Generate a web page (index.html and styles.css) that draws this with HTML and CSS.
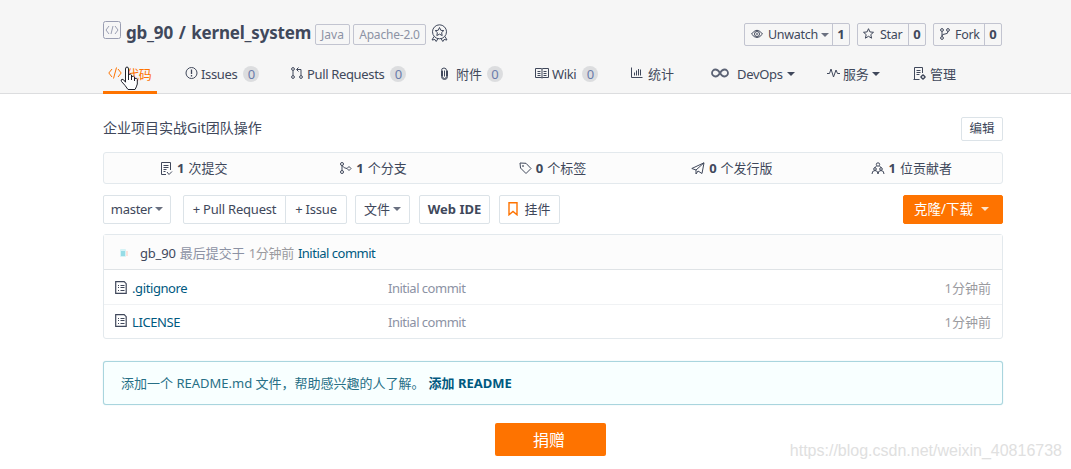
FILE: index.html
```html
<!DOCTYPE html>
<html lang="zh-CN">
<head>
    <meta charset="UTF-8">
    <meta name="viewport" content="width=device-width, initial-scale=1.0">
    <title>gb_90/kernel_system</title>
    <link rel="stylesheet" href="styles.css">
</head>
<body>
    <header class="header">
        <div class="container">
            <div class="title-row">
                <svg class="project-icon" width="18" height="18" viewBox="0 0 18 18"><rect x=".5" y=".5" width="17" height="17" rx="2"/><path d="M6 5L3 9l3 4M12 5l3 4-3 4M10 5l-2 8"/></svg>
                <h1>gb_90 / kernel_system</h1>
                <span class="tag tag-java">Java</span>
                <span class="tag tag-license">Apache-2.0</span>
                <svg class="medal" width="17" height="18" viewBox="0 0 17 18"><circle cx="8.5" cy="7.8" r="7"/><path d="M8.5 3.5l1.3 2.8 3 .3-2.2 2 .6 3-2.7-1.5-2.7 1.5.6-3-2.2-2 3-.3zM3 12.5l-2 3.5 3-.5 1.2 2 1.8-3M14 12.5l2 3.5-3-.5-1.2 2-1.8-3"/></svg>
                <div class="actions">
                    <div class="action watch"><span class="action-name"><svg width="12" height="10" viewBox="0 0 12 10"><path d="M.5 5Q6-2.5 11.5 5 6 12 .5 5z"/><circle cx="6" cy="5" r="2.5"/><circle cx="6" cy="5" r=".5"/></svg><span>Unwatch</span><i class="caret"></i></span><b>1</b></div>
                    <div class="action star"><span class="action-name"><svg width="11" height="11" viewBox="0 0 11 11"><path d="M5.5.7l1.4 3.2 3.6.4-2.7 2.3.8 3.6-3.1-1.9-3.1 1.9.8-3.6L.5 4.3l3.6-.4z"/></svg><span>Star</span></span><b>0</b></div>
                    <div class="action fork"><span class="action-name"><svg width="10" height="12" viewBox="0 0 10 12"><circle cx="2" cy="2" r="1.4"/><circle cx="8" cy="2" r="1.4"/><circle cx="2" cy="10" r="1.4"/><path d="M2 3.5v5M8 3.5Q8 6 5 6T2 8"/></svg><span>Fork</span></span><b>0</b></div>
                </div>
            </div>
            <nav class="tabs">
                <a class="tab active"><svg width="14" height="12" viewBox="0 0 14 12"><path d="M4 2L.8 6 4 10M10 2l3.2 4L10 10M8.5.5l-3 11"/></svg><span>代码</span></a>
                <a class="tab"><svg width="13" height="12" viewBox="0 0 13 12"><circle cx="6.5" cy="6" r="5.5"/><path d="M6.5 2.5V7M6.5 8v1.5" stroke-width="1.3"/></svg><span>Issues</span><em>0</em></a>
                <a class="tab tab-pull"><svg width="12" height="12" viewBox="0 0 12 12"><circle cx="2" cy="2" r="1.4"/><circle cx="2" cy="10" r="1.4"/><circle cx="10" cy="10" r="1.4"/><path d="M2 3.5v5M10 8.5v-6H6M7.5.5l-2 2 2 2"/></svg><span>Pull Requests</span><em>0</em></a>
                <a class="tab tab-attach"><svg width="9" height="13" viewBox="0 0 9 13"><path d="M2.5 3.5v6a2 2 0 0 0 4 0v-6a2.5 2.5 0 0 0-5 0v6a3 3 0 0 0 6 0v-6M4.500 3.5v6"/></svg><span>附件</span><em>0</em></a>
                <a class="tab"><svg width="14" height="12" viewBox="0 0 14 12"><path d="M.5 1.5H6l1 .5 1-.5h5.500v9H8l-1 .5-1-.5H.5zM7 2v9M2.500 4.500h3M2.500 6.500h3M2.500 8.500h3M8.500 4.500h3M8.500 6.500h3M8.500 8.500h3"/></svg><span>Wiki</span><em>0</em></a>
                <a class="tab tab-stat"><svg width="12" height="12" viewBox="0 0 12 12"><path d="M.5.5v10h11M3.500 8.500v-3M5.500 8.500v-5M7.500 8.500V2M9.500 8.500v-6"/></svg><span>统计</span></a>
                <a class="tab tab-devops"><svg width="18" height="10" viewBox="0 0 18 10"><path stroke-width="1.800" stroke="#5c6375" d="M9 5C7.500 2.500 6.500 1.500 4.500 1.500a3.500 3.500 0 0 0 0 7C6.500 8.500 7.500 7.500 9 5s2.500-3.500 4.500-3.500a3.500 3.500 0 0 1 0 7C11.500 8.500 10.500 7.500 9 5z"/></svg><span>DevOps</span><i class="caret"></i></a>
                <a class="tab"><svg width="13" height="12" viewBox="0 0 13 12"><path d="M0 6.500h2.500L4 2l2.500 8L9 3l1.500 3.500H13"/></svg><span>服务</span><i class="caret"></i></a>
                <a class="tab tab-manage"><svg width="13" height="13" viewBox="0 0 13 13"><path d="M6 12.500H1.500V.5h8V6M3.500 3.500h4M3.500 5.500h4M3.500 7.500h3M.5 12.500h6"/><circle cx="10" cy="10" r="1.600" stroke-width="1.300"/><path d="M10 7v1M10 12v1M7 10h1M12 10h1"/></svg><span>管理</span></a>
            </nav>
        </div>
        <svg class="pointer" width="19" height="25" viewBox="0 0 19 25"><path d="M5.500 14V3q0-2 1.500-2t1.500 2v7V8.500q2.500-1 3 .5v1.500q2.500-.8 3 .5v1.500q2.500-.8 2.800.9V18q-.8 3-2.300 5.500H8Q5 19 1.500 15.500q-1-1.800.5-2.300 1.800 0 3.500 3zM8.500 9v5M11.500 10v4M14.500 12v3"/></svg>
    </header>

    <main class="container">
        <div class="description">
            <p>企业项目实战Git团队操作</p>
            <button class="btn edit">编辑</button>
        </div>

        <div class="stats">
            <div class="stat"><svg width="13" height="13" viewBox="0 0 13 13"><path d="M6 12.500H1.500V.5h9V8M3.500 3.500h5M3.500 5.500h5M3.500 7.500h3M3.500 9.500h2M7 10l2 2.500 3-3"/></svg><b>1</b>次提交</div>
            <div class="stat"><svg width="13" height="12" viewBox="0 0 13 12"><circle cx="3" cy="2" r="1.500"/><circle cx="3" cy="10" r="1.500"/><path d="M10 4.500l2 2-2 2-2-2zM3 3.500v5M3 3.500Q5 6.500 8 6.500"/></svg><b>1</b>个分支</div>
            <div class="stat"><svg width="13" height="12" viewBox="0 0 13 12"><path d="M1 1l6 .3L12 6.500 7 11.500 1.500 6z"/><circle cx="4" cy="4" r=".5"/></svg><b>0</b>个标签</div>
            <div class="stat"><svg width="14" height="13" viewBox="0 0 14 13"><path d="M.8 6.500L13 .8 11 11.500 7 9 5 12V8zM13 .8L5 8"/></svg><b>0</b>个发行版</div>
            <div class="stat"><svg width="14" height="12" viewBox="0 0 14 12"><circle cx="7" cy="2.500" r="1.700"/><circle cx="4" cy="7" r="1.300"/><circle cx="10" cy="7" r="1.300"/><path d="M1 12q0-3.500 3-3.500T7 12q0-3.500 3-3.500t3 3.500M5.500 4L3.500 6M8.500 4l2 2"/></svg><b>1</b>位贡献者</div>
        </div>

        <div class="toolbar">
            <button class="btn branch"><span>master</span><i class="caret"></i></button>
            <div class="btn-group">
                <button class="btn pull">+ Pull Request</button>
                <button class="btn issue">+ Issue</button>
            </div>
            <button class="btn files-menu"><span>文件</span><i class="caret"></i></button>
            <button class="btn ide">Web IDE</button>
            <button class="btn widget"><svg width="10" height="14" viewBox="0 0 10 14"><path d="M1 .8h8v12L5 9.500l-4 3.300z"/></svg><span>挂件</span></button>
            <button class="btn clone"><span>克隆/下载</span><i class="caret"></i></button>
        </div>

        <div class="files">
            <div class="commit">
                <svg class="avatar" width="10" height="8" viewBox="0 0 10 8"><rect width="6" height="8" rx="1" fill="#d6f3f6"/><rect x="1" y="2" width="4" height="5" fill="#96dce6"/><rect x="6" y="2" width="2" height="5" fill="#fbe2dc"/></svg>
                <span class="author">gb_90</span>
                <span class="when">最后提交于</span>
                <span class="ago">1分钟前</span>
                <a class="message-link">Initial commit</a>
            </div>
            <div class="file">
                <svg width="12" height="13" viewBox="0 0 12 13"><path d="M.7.7h8.500l2 2v9.600H.7zM3 4.500h1M3 6.500h1M3 9.500h1M5.500 4.500h4M5.500 6.500h4M5.500 9.500h4"/></svg>
                <a class="file-name">.gitignore</a>
                <span class="message">Initial commit</span>
                <span class="ago">1分钟前</span>
            </div>
            <div class="file">
                <svg width="12" height="13" viewBox="0 0 12 13"><path d="M.7.7h8.500l2 2v9.600H.7zM3 4.500h1M3 6.500h1M3 9.500h1M5.500 4.500h4M5.500 6.500h4M5.500 9.500h4"/></svg>
                <a class="file-name">LICENSE</a>
                <span class="message">Initial commit</span>
                <span class="ago">1分钟前</span>
            </div>
        </div>

        <div class="readme-tip"><span>添加一个 README.md 文件，帮助感兴趣的人了解。</span><a>添加 README</a></div>
        <button class="donate">捐赠</button>
    </main>
    <div class="watermark">https://blog.csdn.net/weixin_40816738</div>
</body>
</html>
```
FILE: styles.css
```css
* {
    box-sizing: border-box;
}

body {
    margin: 0;
    height: 469px;
    overflow: hidden;
    background: #fff;
    color: #40485b;
    font-family: "Noto Sans", "Noto Sans CJK SC", sans-serif;
    font-size: 13px;
    line-height: 18px;
}

h1, p {
    margin: 0;
}

i, em {
    font-style: normal;
}

a {
    color: #005980;
}

svg {
    fill: none;
    stroke: #40485b;
    stroke-width: 1;
    flex: none;
}

button {
    font: inherit;
    color: inherit;
    white-space: nowrap;
}

.container {
    width: 900px;
    margin-left: 103px;
}

.caret {
    width: 0;
    height: 0;
    border: 4px solid transparent;
    border-top-color: currentColor;
    border-bottom: 0;
}

.header {
    height: 94px;
    background: #f6f6f6;
    border-bottom: 1px solid #dcdddf;
}

.title-row {
    display: flex;
    height: 57px;
    padding-top: 21px;
}

.project-icon {
    stroke: #9a9eb2;
}

h1 {
    width: 189px;
    margin-left: 5px;
    font-size: 17px;
    line-height: 24px;
    letter-spacing: -0.2px;
    word-spacing: 1.5px;
    white-space: nowrap;
}

.tag {
    height: 21px;
    margin-top: 3px;
    border: 1px solid #c2c4d0;
    border-radius: 2px;
    color: #8c92a4;
    font-size: 12px;
    line-height: 20px;
    text-align: center;
}

.tag-java {
    width: 35px;
}

.tag-license {
    width: 73px;
    margin-left: 3px;
    letter-spacing: -0.2px;
}

.medal {
    margin: 3px 0 0 5px;
}

.actions {
    display: flex;
    gap: 7px;
    margin: 2px 1px 0 auto;
}

.action {
    display: flex;
    height: 23px;
    border: 1px solid #c2c4d0;
    border-radius: 2px;
    line-height: 21px;
}

.watch {
    width: 106px;
}

.star, .fork {
    width: 69px;
}

.action-name {
    display: flex;
    flex: 1;
    align-items: center;
    padding-left: 6px;
    font-size: 12.5px;
    letter-spacing: -0.3px;
}

.star .action-name {
    padding-left: 5px;
}

.star .action-name span {
    margin-left: 6px;
}

.action-name svg {
    margin-bottom: 2px;
}

.action-name span {
    margin-left: 5px;
}

.action-name .caret {
    margin-left: 3px;
    border-top-color: #6a7080;
}

.action b {
    width: 17px;
    border-left: 1px solid #c2c4d0;
    text-align: center;
}

.tabs {
    display: grid;
    grid-template-columns: 82px 106px 149px 95px 96px 80px 116px 86px 90px;
    height: 37px;
}

.tab {
    display: flex;
    height: 34px;
    align-items: center;
    white-space: nowrap;
    color: #40485b;
}

.tab svg {
    margin-bottom: 2px;
}

.tab span {
    margin-left: 3px;
    letter-spacing: -0.35px;
}

.tab em {
    width: 16px;
    height: 16px;
    margin-left: 6px;
    border-radius: 8px;
    background: #dcdddf;
    color: #6b7cab;
    line-height: 16px;
    text-align: center;
}

.tab .caret {
    margin-left: 4px;
}

.tab.active {
    width: 54px;
    height: 37px;
    padding-left: 5px;
    border-bottom: 3px solid #fe7300;
    color: #fe7300;
}

.active svg {
    stroke: #fe7300;
}

.tab.active span {
    margin-left: 4px;
}

.tab-pull span {
    margin-left: 4px;
}

.tab-attach span, .tab-stat span, .tab-manage span {
    margin-left: 4px;
    letter-spacing: 0;
}

.tab-attach span {
    margin-left: 7px;
}

.tab-attach em {
    margin-left: 5px;
}

.tab-stat span {
    margin-left: 5px;
}

.tab-devops span {
    margin-left: 8px;
    letter-spacing: -0.3px;
}

.pointer {
    position: absolute;
    left: 120px;
    top: 66px;
    fill: #fff;
    stroke: #20212a;
}

.description {
    display: flex;
    align-items: center;
    justify-content: space-between;
    height: 24px;
    margin-top: 23px;
}

.description p {
    margin-bottom: 2px;
    font-size: 14px;
}

.btn {
    display: flex;
    height: 29px;
    padding: 0 0 1px;
    align-items: center;
    justify-content: center;
    border: 1px solid #dce3e8;
    border-radius: 2px;
    background: #fff;
}

.edit {
    width: 42px;
    height: 24px;
    padding: 0;
    font-size: 12.5px;
}

.stats {
    display: grid;
    grid-template-columns: repeat(5, 1fr);
    height: 32px;
    margin-top: 11px;
    padding-right: 1px;
    border: 1px solid #e3e9ed;
    border-radius: 3px;
    background: #fcfcfc;
}

.stat {
    display: flex;
    align-items: center;
    justify-content: center;
    gap: 4px;
}

.toolbar {
    display: flex;
    margin-top: 11px;
}

.branch {
    width: 68px;
    letter-spacing: -0.3px;
}

.branch .caret, .files-menu .caret {
    margin-left: 3px;
    border-top-color: #6a7080;
}

.btn-group {
    display: flex;
    margin: 0 8px 0 12px;
}

.btn-group .btn {
    letter-spacing: -0.2px;
}

.pull {
    width: 103px;
    border-radius: 2px 0 0 2px;
}

.issue {
    width: 62px;
    margin-left: -1px;
    border-radius: 0 2px 2px 0;
}

.files-menu {
    width: 55px;
}

.ide {
    width: 71px;
    margin-left: 9px;
    font-weight: bold;
}

.widget {
    width: 61px;
    margin-left: 9px;
    gap: 6px;
}

.widget svg {
    stroke: #fe7300;
    stroke-width: 1.4;
}

.clone {
    width: 100px;
    margin-left: auto;
    padding-right: 3px;
    border-color: #fe7300;
    background: #fe7300;
    color: #fff;
    font-size: 13.5px;
}

.clone .caret {
    margin-left: 8px;
    border-top-color: #ffe3cc;
}

.files {
    height: 105px;
    margin-top: 10px;
    border: 1px solid #e3e9ed;
    border-radius: 3px;
}

.commit {
    display: flex;
    align-items: center;
    height: 35px;
    padding: 2px 0 0 16px;
    border-bottom: 1px solid #dfe3e6;
    background: #fcfcfc;
}

.avatar {
    stroke: none;
}

.author {
    margin-left: 10px;
    letter-spacing: -0.2px;
}

.when {
    margin-left: 4px;
    color: #8c92a4;
}

.ago {
    color: #9b9b9f;
}

.commit .ago {
    margin: 0 4px;
    letter-spacing: -0.3px;
}

.message-link, .message {
    letter-spacing: -0.5px;
}

.file {
    display: flex;
    align-items: center;
    height: 34px;
    padding: 2px 11px 0 11px;
}

.file + .file {
    padding-top: 0;
    border-top: 1px solid #f0f2f4;
}

.file svg {
    margin-bottom: 2px;
    stroke-width: 1.2;
}

.file-name {
    width: 256px;
    margin-left: 5px;
    letter-spacing: -0.4px;
}

.message {
    flex: 1;
    color: #8c92a4;
}

.readme-tip {
    display: flex;
    align-items: center;
    height: 44px;
    margin-top: 22px;
    padding-left: 17px;
    border: 1px solid #a9d5de;
    border-radius: 3px;
    background: #f8ffff;
    box-shadow: 0 0 1px #a9d5de;
    color: #276f86;
}

.readme-tip a {
    margin-left: 4px;
    font-weight: bold;
}

.donate {
    display: block;
    width: 111px;
    height: 33px;
    margin: 18px 0 0 392px;
    padding: 0 3px 0 0;
    border: 0;
    border-radius: 2px;
    background: #fe7300;
    color: #fff;
    font-size: 16px;
}

.watermark {
    position: absolute;
    right: 9px;
    bottom: 9px;
    color: #e0e0e0;
    font-family: "Liberation Sans", sans-serif;
    font-size: 16px;
}
```
